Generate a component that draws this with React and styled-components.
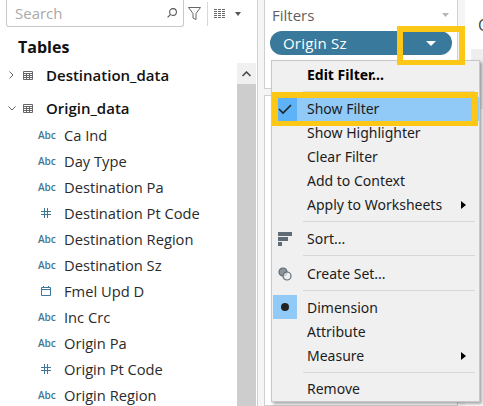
import styled, { createGlobalStyle } from 'styled-components';

const GlobalStyle = createGlobalStyle`
	html, body {
		margin: 0;
		padding: 0;
		background: #fff;
	}
	body {
		font-family: "Open Sans", "Liberation Sans", sans-serif;
		color: #1a1a1a;
	}
`;

const Page = styled.div`
	position: relative;
	width: 483px;
	height: 406px;
	overflow: hidden;
	display: flex;
	background: #fff;
`;

const DataPane = styled.div`
	width: 256px;
	flex: none;
	display: flex;
	flex-direction: column;
`;

const SearchRow = styled.div`
	display: flex;
	align-items: center;
	height: 27px;
	padding-left: 6px;
`;

const SearchBox = styled.div`
	width: 178px;
	height: 27px;
	box-sizing: border-box;
	border: 1px solid #c8c8c8;
	border-top: none;
	border-radius: 0 0 3px 3px;
	display: flex;
	align-items: center;
	justify-content: space-between;
	padding: 0 6px 0 8px;
	font-size: 15px;
	color: #a9a9a9;
`;

const FunnelIcon = styled.svg`
	margin-left: 4px;
`;

const ToolDivider = styled.div`
	width: 1px;
	height: 24px;
	background: #d8d8d8;
	margin: 0 6px;
`;

const CaretGap = styled.span`
	width: 9px;
`;

const Body = styled.div`
	flex: 1;
	display: flex;
	min-height: 0;
`;

const FieldList = styled.div`
	flex: 1;
	min-width: 0;
`;

const Heading = styled.div`
	font-size: 16px;
	font-weight: 700;
	line-height: 20px;
	margin: 10px 0 0 18px;
	color: #111;
`;

const TableRow = styled.div`
	display: flex;
	align-items: center;
	height: 24px;
	margin-top: ${p => p.$gap}px;
	font-size: 15px;
	font-weight: 600;
	color: #111;
`;

const Chevron = styled.div`
	width: 23px;
	display: flex;
	justify-content: center;
	box-sizing: border-box;
`;

const TableName = styled.span`
	margin-left: 13px;
`;

const Fields = styled.div`
	margin-top: 2px;
`;

const FieldRow = styled.div`
	display: flex;
	align-items: center;
	height: 26px;
	font-size: 14.7px;
	color: #2b2b2b;
`;

const FieldIcon = styled.div`
	width: 64px;
	flex: none;
	padding-left: ${p => p.$inset}px;
	box-sizing: border-box;
	font-size: 10px;
	font-weight: 600;
	color: #3f7896;
	display: flex;
	align-items: center;
`;

const Scrollbar = styled.div`
	width: 19px;
	margin-top: 36px;
	flex: none;
	display: flex;
	flex-direction: column;
`;

const ScrollUp = styled.div`
	height: 21px;
	background: #f0f0f0;
	display: flex;
	align-items: center;
	justify-content: center;
`;

const ScrollThumb = styled.div`
	flex: 1;
	background: #cdcdcd;
`;

const Gutter = styled.div`
	flex: none;
	width: ${p => p.$w}px;
	margin-left: ${p => (p.$line ? 1 : 0)}px;
	box-sizing: border-box;
	background: #f5f5f5;
	border-left: ${p => (p.$line ? '1px solid #cfcfcf' : 'none')};
`;

const CardColumn = styled.div`
	width: 194px;
	flex: none;
	display: flex;
	flex-direction: column;
	gap: 6px;
	background: #f5f5f5;
`;

const FilterCard = styled.div`
	height: 89px;
	flex: none;
	box-sizing: border-box;
	background: #fff;
	border: 1px solid #cfcfcf;
	border-top: none;
	padding: 5px 0 0 5px;
`;

const NextCard = styled.div`
	flex: 1;
	background: #fff;
	border: 1px solid #cfcfcf;
`;

const CardHead = styled.div`
	display: flex;
	align-items: center;
	justify-content: space-between;
	font-size: 15px;
	color: #5f5f5f;
	padding: 0 8px 0 2px;
	height: 20px;
`;

const Pill = styled.div`
	width: 182px;
	height: 24px;
	margin-top: 6px;
	border-radius: 12px;
	background: #38799c;
	color: #fff;
	font-size: 15px;
	letter-spacing: 0.2px;
	display: flex;
	align-items: center;
	justify-content: space-between;
	padding: 0 16px 0 13px;
	box-sizing: border-box;
`;

const Canvas = styled.div`
	flex: 1;
	min-width: 0;
	padding-left: 6px;
	overflow: hidden;
`;

const SheetTitle = styled.div`
	margin: 15px 0 0 7px;
	height: 20px;
	line-height: 20px;
	font-size: 16px;
	color: #444;
`;

const SheetBlock = styled.div`
	height: 60px;
	margin-top: 14px;
	background: #eeeeee;
`;

const Menu = styled.div`
	position: absolute;
	left: 271px;
	top: 60px;
	width: 209px;
	height: 342px;
	box-sizing: border-box;
	background: #f0f0f0;
	border: 1px solid #c8c8c8;
	box-shadow: 2px 2px 3px rgba(0, 0, 0, 0.35);
	padding-top: 2px;
	font-family: "Noto Sans", "Open Sans", sans-serif;
	font-size: 14px;
	color: #1c1c1c;
`;

const MenuItem = styled.div`
	position: relative;
	height: 24px;
	line-height: 24px;
	padding-left: 35px;
	font-weight: ${p => (p.$bold ? 700 : 400)};
	color: ${p => (p.$bold ? '#000' : 'inherit')};
	background: ${p => (p.$active ? '#91c9f7' : 'transparent')};
`;

const MenuGlyph = styled.div`
	position: absolute;
	left: 1px;
	top: ${p => p.$top || 0}px;
	width: 24px;
	height: 24px;
	display: flex;
	align-items: center;
	justify-content: center;
	background: ${p => p.$bg || 'transparent'};
`;

const MenuArrow = styled.div`
	position: absolute;
	right: 13px;
	top: 8px;
	width: 0;
	height: 0;
	border-left: 5px solid #000;
	border-top: 4px solid transparent;
	border-bottom: 4px solid transparent;
`;

const MenuRule = styled.div`
	height: 1px;
	background: #d7d7d7;
	margin: 4px 4px ${p => p.$after || 5}px 31px;
`;

const Highlight = styled.div`
	position: absolute;
	box-sizing: border-box;
	border: solid #fdc716;
	border-width: 6px 6px 5px 6px;
	left: ${p => p.$x}px;
	top: ${p => p.$y}px;
	width: ${p => p.$w}px;
	height: ${p => p.$h}px;
`;

const Caret = ({ color = '#555', w = 10, h = 5 }) => (
	<svg width={w} height={h} viewBox="0 0 10 5" preserveAspectRatio="none">
		<path d="M0 0h10L5 5z" fill={color} />
	</svg>
);

const TableIcon = () => (
	<svg width="10" height="9" viewBox="0 0 10 9" fill="none" stroke="#666" strokeWidth="1">
		<path d="M.5.5h9v8h-9zM.5 2.5h9M.5 4.5h9M.5 6.5h9M3.5 2.5v6M6.5 2.5v6" />
	</svg>
);

const ColumnsIcon = () => (
	<svg width="12" height="9" viewBox="0 0 12 9" stroke="#666" strokeWidth="1" strokeDasharray="3 1">
		<path d="M0 .5h12M0 2.5h12M0 4.5h12M0 6.5h12M0 8.5h12" />
	</svg>
);

const HashIcon = () => (
	<svg width="10" height="10" viewBox="0 0 10 10" fill="none" stroke="#3f7896" strokeWidth="1">
		<path d="M3.5 0v10M6.5 0v10M0 3.5h10M0 6.5h10" />
	</svg>
);

const DateIcon = () => (
	<svg width="10" height="10" viewBox="0 0 10 10" fill="none" stroke="#3f7896" strokeWidth="1">
		<path d="M.5 1.5h9v8h-9zM.5 3.5h9M2.5 0v2M7.5 0v2" />
	</svg>
);

const fields = [
	['abc', 'Ca Ind'],
	['abc', 'Day Type'],
	['abc', 'Destination Pa'],
	['num', 'Destination Pt Code'],
	['abc', 'Destination Region'],
	['abc', 'Destination Sz'],
	['date', 'Fmel Upd D'],
	['abc', 'Inc Crc'],
	['abc', 'Origin Pa'],
	['num', 'Origin Pt Code'],
	['abc', 'Origin Region']
];

const App = () => {
	return (
		<Page>
			<GlobalStyle />
			<DataPane>
				<SearchRow>
					<SearchBox>
						Search
						<svg width="10" height="10" viewBox="0 0 10 10" fill="none" stroke="#555" strokeWidth="1.1">
							<circle cx="6" cy="4" r="3.4" />
							<path d="M3.6 6.4L.6 9.4" />
						</svg>
					</SearchBox>
					<FunnelIcon width="13" height="13" viewBox="0 0 13 13" fill="none" stroke="#666">
						<path d="M.5.5h12L8 6.5v6l-3-1.5V6.5z" />
					</FunnelIcon>
					<ToolDivider />
					<ColumnsIcon />
					<CaretGap />
					<Caret w={6} h={4} />
				</SearchRow>
				<Body>
					<FieldList>
						<Heading>Tables</Heading>
						<TableRow $gap={6}>
							<Chevron>
								<svg width="5" height="8" viewBox="0 0 5 8" fill="none" stroke="#666">
									<path d="M.5.5L4 4 .5 7.5" />
								</svg>
							</Chevron>
							<TableIcon />
							<TableName>Destination_data</TableName>
						</TableRow>
						<TableRow $gap={9}>
							<Chevron>
								<svg width="8" height="5" viewBox="0 0 8 5" fill="none" stroke="#666">
									<path d="M.5.5L4 4 7.5.5" />
								</svg>
							</Chevron>
							<TableIcon />
							<TableName>Origin_data</TableName>
						</TableRow>
						<Fields>
							{fields.map(([type, name]) => (
								<FieldRow key={name}>
									<FieldIcon $inset={type === 'abc' ? 38 : 41}>
										{type === 'abc' && 'Abc'}
										{type === 'num' && <HashIcon />}
										{type === 'date' && <DateIcon />}
									</FieldIcon>
									{name}
								</FieldRow>
							))}
						</Fields>
					</FieldList>
					<Scrollbar>
						<ScrollUp>
							<svg width="9" height="6" viewBox="0 0 9 6" fill="none" stroke="#444" strokeWidth="1.5">
								<path d="M.5 5L4.5 1l4 4" />
							</svg>
						</ScrollUp>
						<ScrollThumb />
					</Scrollbar>
				</Body>
			</DataPane>
			<Gutter $line $w={7} />
			<CardColumn>
				<FilterCard>
					<CardHead>
						Filters
						<Caret color="#b5b5b5" w={7} h={4} />
					</CardHead>
					<Pill>
						Origin Sz
						<Caret color="#fff" w={10} h={5} />
					</Pill>
				</FilterCard>
				<NextCard />
			</CardColumn>
			<Gutter $w={7} />
			<Canvas>
				<SheetTitle>O</SheetTitle>
				<SheetBlock />
			</Canvas>
			<Menu>
				<MenuItem $bold>Edit Filter...</MenuItem>
				<MenuRule />
				<MenuItem $active>
					<MenuGlyph>
						<svg width="24" height="24" viewBox="0 0 24 24">
							<path d="M5 0h19v24H5z" fill="#5db2f8" />
							<path d="M6 12l4 4 8-8" fill="none" stroke="#222" strokeWidth="1.6" />
						</svg>
					</MenuGlyph>
					Show Filter
				</MenuItem>
				<MenuItem>Show Highlighter</MenuItem>
				<MenuItem>Clear Filter</MenuItem>
				<MenuItem>Add to Context</MenuItem>
				<MenuItem>
					Apply to Worksheets
					<MenuArrow />
				</MenuItem>
				<MenuRule />
				<MenuItem>
					<MenuGlyph>
						<svg width="14" height="14" viewBox="0 0 14 14" fill="#5f6b75">
							<path d="M0 0h14v4H0zM0 5h10v4H0zM0 10h4v4H0z" />
						</svg>
					</MenuGlyph>
					Sort...
				</MenuItem>
				<MenuRule $after={6} />
				<MenuItem>
					<MenuGlyph>
						<svg width="14" height="14" viewBox="0 0 14 14" fill="none" stroke="#5f6b75" strokeWidth="1.2">
							<circle cx="5" cy="5" r="4" fill="#8b949b" />
							<circle cx="9" cy="9" r="4" fill="#f0f0f0" fillOpacity="0.7" />
						</svg>
					</MenuGlyph>
					Create Set...
				</MenuItem>
				<MenuRule />
				<MenuItem>
					<MenuGlyph $bg="#91c9f7" $top={-1}>
						<svg width="8" height="8" viewBox="0 0 8 8">
							<circle cx="4" cy="4" r="4" fill="#222" />
						</svg>
					</MenuGlyph>
					Dimension
				</MenuItem>
				<MenuItem>Attribute</MenuItem>
				<MenuItem>
					Measure
					<MenuArrow />
				</MenuItem>
				<MenuRule $after={4} />
				<MenuItem>Remove</MenuItem>
			</Menu>
			<Highlight $x={397} $y={26} $w={68} $h={39} />
			<Highlight $x={272} $y={92} $w={206} $h={34} />
		</Page>
	);
};

export default App;
